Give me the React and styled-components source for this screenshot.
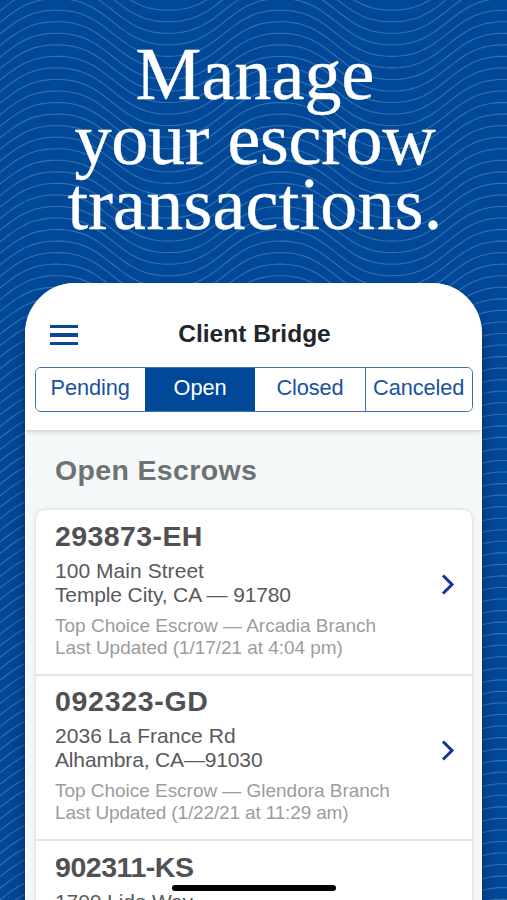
import React from 'react'
import styled, { createGlobalStyle } from 'styled-components'

const GlobalStyle = createGlobalStyle`
  * {
    box-sizing: border-box;
  }
  body {
    margin: 0;
    font-family: 'Liberation Sans', Arial, sans-serif;
  }
`;

const Screen = styled.main`
  position: relative;
  display: flex;
  flex-direction: column;
  width: 507px;
  height: 900px;
  overflow: hidden;
  background: #024899;
`;

const Waves = styled.svg`
  position: absolute;
  inset: 0;
  fill: none;
  stroke: #3273ad;
  stroke-width: 1.1;
`;

const Headline = styled.h1`
  position: relative;
  display: flex;
  flex-direction: column;
  align-items: center;
  height: 283px;
  margin: 0;
  padding: 42px 0 0 3px;
  flex-shrink: 0;
  color: #fff;
  font: 400 74px/65px 'Liberation Serif', serif;
  -webkit-text-stroke: 0.4px #fff;
`;

const Line = styled.span`
  white-space: nowrap;
  letter-spacing: ${({ $spacing }) => $spacing}px;
`;

const Phone = styled.section`
  position: relative;
  display: flex;
  flex-direction: column;
  width: 457px;
  height: 617px;
  margin-left: 25px;
  overflow: hidden;
  background: #f4f8f9;
  border: solid #fff;
  border-width: 0 1px;
  border-radius: 50px 50px 0 0;
  box-shadow: 0 14px 14px rgba(0, 20, 70, 0.55);
`;

const Header = styled.header`
  height: 147px;
  padding: 29px 8.5px 0;
  background: #fff;
  box-shadow: 0 1px 5px rgba(0, 0, 0, 0.22);
  flex-shrink: 0;
`;

const TitleBar = styled.div`
  display: grid;
  grid-template-columns: 60px 1fr 60px;
  align-items: center;
  height: 44px;
  padding: 0 15px;
`;

const MenuButton = styled.button`
  display: flex;
  flex-direction: column;
  gap: 5px;
  width: 28px;
  padding: 2px 0 0;
  background: none;
  border: 0;

  span {
    height: 3.6px;
    background: #0b4799;
  }
`;

const Title = styled.h2`
  margin: 0;
  padding-left: 2px;
  color: #20262c;
  font-size: 24.5px;
  font-weight: 700;
  text-align: center;
`;

const Tabs = styled.nav`
  display: grid;
  grid-template-columns: 109.5px 110px 110px 1fr;
  height: 45px;
  margin-top: 11px;
  overflow: hidden;
  border: 1px solid #3b70ae;
  border-radius: 6px;
`;

const Tab = styled.button`
  padding: 0 0 3px;
  color: ${({ $active }) => ($active ? '#fff' : '#1a529f')};
  background: ${({ $active }) => ($active ? '#024899' : '#fff')};
  border: 0;
  border-left: ${({ $divider }) => ($divider ? '1px solid #3b70ae' : '0')};
  font: 400 21.8px 'Liberation Sans', Arial, sans-serif;
  letter-spacing: -0.1px;
  white-space: nowrap;
`;

const SectionTitle = styled.h3`
  height: 79px;
  margin: 0;
  padding: 22px 0 0 29px;
  color: #6f7273;
  font-size: 28.5px;
  font-weight: 700;
  letter-spacing: 0.35px;
  line-height: 36px;
  flex-shrink: 0;
`;

const List = styled.ul`
  width: 437.5px;
  height: 420px;
  margin: 0 0 0 9px;
  padding: 0;
  list-style: none;
  background: #fff;
  border: 1px solid #e2e5e6;
  border-radius: 10px 10px 0 0;
  box-shadow: 0 0 4px rgba(0, 0, 0, 0.08);
`;

const Item = styled.li`
  display: flex;
  justify-content: space-between;
  height: 165.7px;
  padding: 11.5px 17px 0 19px;
  border-bottom: 2px solid #e3e4e5;
`;

const Code = styled.h4`
  margin: 0 0 8px;
  color: #505153;
  font-size: 28.5px;
  font-weight: 700;
  line-height: 29px;
`;

const Address = styled.p`
  margin: 0 0 8px;
  color: #58595b;
  font-size: 21px;
  line-height: 24px;
`;

const Meta = styled.p`
  margin: 0;
  color: #9c9c9d;
  font-size: 19px;
  line-height: 22px;
`;

const Row = styled.span`
  display: block;
  width: max-content;
  letter-spacing: ${({ $spacing }) => $spacing || 0}px;
`;

const Chevron = styled.svg`
  width: 14px;
  height: 21px;
  margin-top: 52.5px;
  fill: none;
  stroke: #17338f;
  stroke-width: 3;
`;

const HomeIndicator = styled.div`
  position: absolute;
  left: 172px;
  bottom: 9px;
  width: 164px;
  height: 6px;
  background: #000;
  border-radius: 3px;
`;

const tabs = [
  { label: 'Pending' },
  { label: 'Open' },
  { label: 'Closed' },
  { label: 'Canceled', divider: true },
];

// [text, letter spacing]
const escrows = [
  {
    code: ['293873-EH', 0.4],
    address: [['100 Main Street', 0.05], ['Temple City, CA — 91780', -0.13]],
    meta: [['Top Choice Escrow — Arcadia Branch', 0], ['Last Updated (1/17/21 at 4:04 pm)', -0.05]],
  },
  {
    code: ['092323-GD', 0.7],
    address: [['2036 La France Rd', 0.05], ['Alhambra, CA—91030', -0.15]],
    meta: [['Top Choice Escrow — Glendora Branch', -0.03], ['Last Updated (1/22/21 at 11:29 am)', -0.15]],
  },
  {
    code: ['902311-KS', -0.45],
    address: [['1700 Lido Way', -0.1]],
    meta: [],
  },
];

// crests at x = 56.7 + n * 223.5, slightly steeper than a plain cosine
const wave = (y, amp) => {
  let d = '';
  for (let x = 0; x <= 508; x += 4) {
    const a = ((x - 56.7) / 223.5) * Math.PI * 2;
    const h = y - (amp * (Math.cos(a) - 0.05 * Math.cos(3 * a))) / 0.95;
    d += `${x ? 'L' : 'M'}${x} ${h.toFixed(2)}`;
  }
  return d;
};

export default function App() {
  return (
    <>
      <GlobalStyle />
      <Screen>
        <Waves width="507" height="900">
          {Array.from({ length: 86 }, (_, i) => (
            <path key={i} d={wave(-36 + i * 11.545, 23.1)} />
          ))}
        </Waves>
        <Headline>
          <Line $spacing={0.1}>Manage</Line>
          <Line $spacing={-0.25}>your escrow</Line>
          <Line $spacing={0.25}>transactions.</Line>
        </Headline>
        <Phone>
          <Header>
            <TitleBar>
              <MenuButton aria-label="Menu"><span /><span /><span /></MenuButton>
              <Title>Client Bridge</Title>
            </TitleBar>
            <Tabs>
              {tabs.map(({ label, divider }) => (
                <Tab key={label} $active={label === 'Open'} $divider={divider}>{label}</Tab>
              ))}
            </Tabs>
          </Header>
          <SectionTitle>Open Escrows</SectionTitle>
          <List>
            {escrows.map(({ code, address, meta }) => (
              <Item key={code[0]}>
                <div>
                  <Code><Row $spacing={code[1]}>{code[0]}</Row></Code>
                  <Address>
                    {address.map(([text, spacing]) => <Row key={text} $spacing={spacing}>{text}</Row>)}
                  </Address>
                  <Meta>
                    {meta.map(([text, spacing]) => <Row key={text} $spacing={spacing}>{text}</Row>)}
                  </Meta>
                </div>
                <Chevron viewBox="0 0 14 21"><path d="M2 1.5 11 10.5 2 19.5" /></Chevron>
              </Item>
            ))}
          </List>
        </Phone>
        <HomeIndicator />
      </Screen>
    </>
  )
}
